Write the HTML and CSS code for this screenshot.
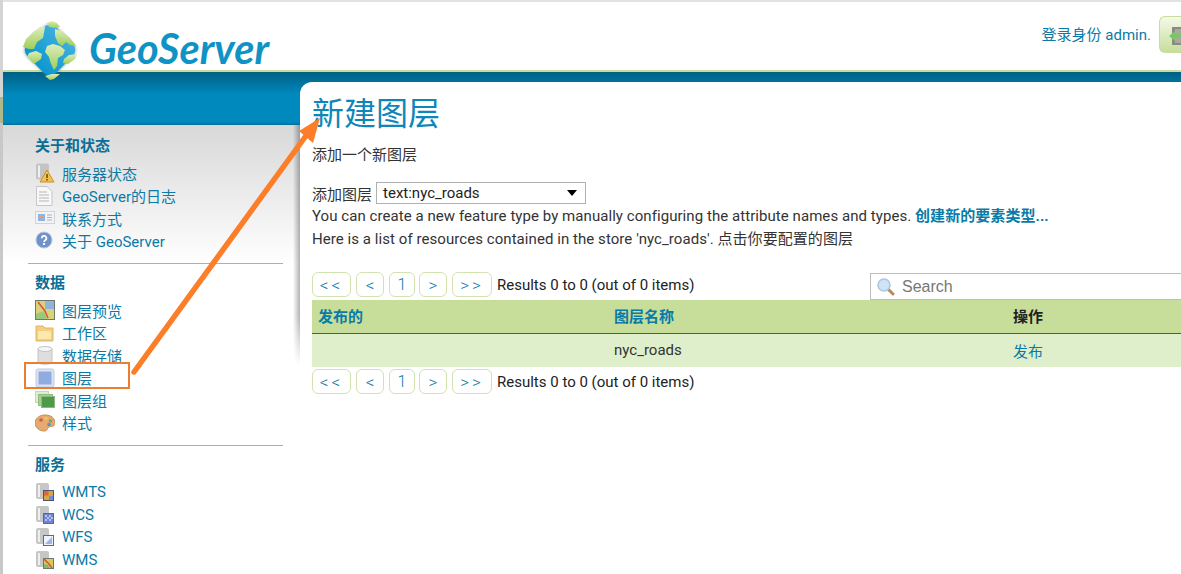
FILE: index.html
```html
<!DOCTYPE html>
<html lang="zh-CN">
<head>
    <meta charset="UTF-8">
    <meta name="viewport" content="width=device-width, initial-scale=1.0">
    <title>GeoServer: 新建图层</title>
    <link rel="stylesheet" href="styles.css">
</head>
<body>

    <header class="page-header">
        <a class="logo" href="#">
            <svg class="logo-globe" width="66" height="66" viewBox="17 16 66 66">
                <defs>
                    <linearGradient id="sea" x1="0" y1="0" x2="0" y2="1">
                        <stop offset="0" stop-color="#3fb0de"/>
                        <stop offset="1" stop-color="#0c97cf"/>
                    </linearGradient>
                    <linearGradient id="land" x1="0" y1="0" x2="0" y2="1">
                        <stop offset="0" stop-color="#dcedbc"/>
                        <stop offset="1" stop-color="#9fce5a"/>
                    </linearGradient>
                    <filter id="soft"><feGaussianBlur stdDeviation="1.500"/></filter>
                </defs>
                <!-- coordinates are the ones on the page -->
                <rect x="29" y="29" width="42" height="42" rx="9" transform="rotate(45 50 50)" fill="#777" opacity="0.55" filter="url(#soft)"/>
                <rect x="29.500" y="29.500" width="41" height="41" rx="9" transform="rotate(45 50 50)" fill="url(#sea)"/>
                <g fill="url(#land)">
                    <path d="M47 23l5-2 5 2 3 4-6 1-5-1z"/>
                    <path d="M45 27l-1 6-1 5-6 4-3 7-5 0-6-2 3-8 7-7 7-5z"/>
                    <path d="M29 53l7-2 6 3-1 5-7 5-3-3-4-4z"/>
                    <path d="M47 46l6-2 7 2 5 4-2 5-5 3-1 8-3 4-3-6-2-7-4-5z"/>
                    <path d="M55 29l7 2 8 7 6 8-6-1-4-3-4 4-4-3-3-7z"/>
                    <path d="M64 59l5-4 8-1-2 5-7 5-5-1z"/>
                    <path d="M45 76l7-2 8 0-6 5-4 1z"/>
                </g>
            </svg>
            <span class="logo-text">GeoServer</span>
        </a>
        <div class="login">
            <span>登录身份 admin.</span>
            <a class="logout" href="#">
                <svg width="18" height="18" viewBox="0 0 18 18">
                    <rect x="3" y="0" width="15" height="18" fill="#8a8a80"/>
                    <rect x="6" y="2" width="12" height="14" fill="#a8a89c"/>
                    <path d="M0 9l6-5v3h6v4H6v3z" fill="#7cc46a"/>
                </svg>
            </a>
        </div>
    </header>

    <div class="page-body">
        <nav class="sidebar">
            <h3>关于和状态</h3>
            <ul>
                <li>
                    <svg class="icon" viewBox="0 0 20 20">
                        <rect x="1" y="0.500" width="13" height="16" rx="2" fill="#c4c4c4"/>
                        <rect x="3" y="2.500" width="2" height="12" fill="#efefef"/>
                        <path d="M12 7l7 12H5z" fill="#f2c14e" stroke="#c8922a"/>
                        <rect x="11.300" y="11" width="1.500" height="4" fill="#6b4a10"/>
                        <rect x="11.300" y="16" width="1.500" height="1.500" fill="#6b4a10"/>
                    </svg>
                    <a href="#">服务器状态</a>
                </li>
                <li>
                    <svg class="icon" viewBox="0 0 20 20">
                        <path d="M1.500 .5H12l5 5V19.500H1.500z" fill="#f8f8f8" stroke="#c6c6c6"/>
                        <path d="M4 6h8M4 9h10M4 12h10M4 15h10" stroke="#b5b5b5"/>
                    </svg>
                    <a href="#">GeoServer的日志</a>
                </li>
                <li>
                    <svg class="icon" viewBox="0 0 20 20">
                        <rect x="0.500" y="3.500" width="19" height="12" fill="#f3f3f3" stroke="#cfd3dc"/>
                        <rect x="3" y="6" width="7" height="7" fill="#8fb3e6"/>
                        <circle cx="6.500" cy="8.500" r="1.800" fill="#e8a064"/>
                        <path d="M12 7h5M12 9.500h5M12 12h5" stroke="#a9b2c2"/>
                    </svg>
                    <a href="#">联系方式</a>
                </li>
                <li>
                    <svg class="icon" viewBox="0 0 20 20">
                        <circle cx="9" cy="9" r="8" fill="#6f93c9" stroke="#b9c8de"/>
                        <path d="M6.800 7.200a2.300 2.300 0 1 1 3.400 2c-.8.500-1.200.9-1.200 1.800" fill="none" stroke="#fff" stroke-width="1.700"/>
                        <rect x="8" y="12" width="2" height="2" fill="#fff"/>
                    </svg>
                    <a href="#">关于 GeoServer</a>
                </li>
            </ul>

            <h3>数据</h3>
            <ul>
                <li>
                    <svg class="icon" viewBox="0 0 20 20">
                        <rect x="0.500" y="0.500" width="19" height="19" fill="#d8d27a" stroke="#6f7a6a"/>
                        <rect x="10" y="1" width="9" height="8" fill="#8fb4dc"/>
                        <path d="M3 2l7 9 3 7" fill="none" stroke="#d9533a" stroke-width="1.500"/>
                        <path d="M1 14l8-3 3 8H1z" fill="#9cc77a"/>
                    </svg>
                    <a href="#">图层预览</a>
                </li>
                <li>
                    <svg class="icon" viewBox="0 0 20 20">
                        <path d="M1 3h7l2 2h8v13H1z" fill="#f4cf7c" stroke="#e0b36a"/>
                        <rect x="3" y="8" width="13" height="8" fill="#fbe9ae"/>
                    </svg>
                    <a href="#">工作区</a>
                </li>
                <li>
                    <svg class="icon" viewBox="0 0 20 20">
                        <path d="M3 4v13c0 3 14 3 14 0V4z" fill="#dedede" stroke="#c4c4c4"/>
                        <ellipse cx="10" cy="4" rx="7" ry="2.500" fill="#f5f5f5" stroke="#c4c4c4"/>
                    </svg>
                    <a href="#">数据存储</a>
                </li>
                <li>
                    <svg class="icon" viewBox="0 0 20 20">
                        <rect x="1" y="1" width="18" height="18" rx="2" fill="#dce3f1" stroke="#bfcbe0"/>
                        <rect x="3.500" y="3.500" width="13" height="13" fill="#8fabe0"/>
                    </svg>
                    <a href="#">图层</a>
                </li>
                <li>
                    <svg class="icon" viewBox="0 0 20 20">
                        <rect x="0.500" y="1.500" width="13" height="11" fill="#dcefd2" stroke="#bcdcae"/>
                        <rect x="3.500" y="4.500" width="14" height="11" fill="#a5cf94" stroke="#8ebd7c"/>
                        <rect x="6.500" y="6.500" width="13" height="11" fill="#4f9a4a" stroke="#8db884"/>
                    </svg>
                    <a href="#">图层组</a>
                </li>
                <li>
                    <svg class="icon" viewBox="0 0 20 20">
                        <path d="M10 2c6 0 10 3 10 8 0 4-4 3-6 4-2 .8-1 4-5 4-5 0-9-4-9-8s4-8 10-8z" fill="#e5a971" stroke="#c98a52"/>
                        <circle cx="6" cy="7" r="1.800" fill="#d65a4a"/>
                        <circle cx="11" cy="5.500" r="1.800" fill="#e8c94e"/>
                        <circle cx="15.500" cy="8" r="1.800" fill="#5fb36b"/>
                        <circle cx="14" cy="11.500" r="1.800" fill="#5c8fd6"/>
                    </svg>
                    <a href="#">样式</a>
                </li>
            </ul>

            <h3>服务</h3>
            <ul>
                <li>
                    <svg class="icon" viewBox="0 0 20 20">
                        <rect x="1" y="1" width="13" height="16" rx="2" fill="#c6c6c6"/>
                        <rect x="3" y="3" width="2" height="12" fill="#efefef"/>
                        <rect x="8.500" y="8.500" width="10" height="10" fill="#d9a441" stroke="#4b5470"/>
                        <rect x="9" y="9" width="4.500" height="4.500" fill="#d9693a"/>
                        <rect x="14" y="14" width="4" height="4" fill="#6f8fd0"/>
                    </svg>
                    <a href="#">WMTS</a>
                </li>
                <li>
                    <svg class="icon" viewBox="0 0 20 20">
                        <rect x="1" y="1" width="13" height="16" rx="2" fill="#c6c6c6"/>
                        <rect x="3" y="3" width="2" height="12" fill="#efefef"/>
                        <rect x="8.500" y="8.500" width="10" height="10" fill="#6f83d0" stroke="#5566b0"/>
                        <path d="M10 10h2v2h-2zM14 10h2v2h-2zM12 12h2v2h-2zM16 12h2v2h-2zM10 14h2v2h-2zM14 14h2v2h-2z" fill="#b5c3ee"/>
                    </svg>
                    <a href="#">WCS</a>
                </li>
                <li>
                    <svg class="icon" viewBox="0 0 20 20">
                        <rect x="1" y="1" width="13" height="16" rx="2" fill="#c6c6c6"/>
                        <rect x="3" y="3" width="2" height="12" fill="#efefef"/>
                        <rect x="8.500" y="8.500" width="10" height="10" fill="#eef2fb" stroke="#5566b0"/>
                        <path d="M10 17l7-7v7z" fill="#9db4e6"/>
                    </svg>
                    <a href="#">WFS</a>
                </li>
                <li>
                    <svg class="icon" viewBox="0 0 20 20">
                        <rect x="1" y="1" width="13" height="16" rx="2" fill="#c6c6c6"/>
                        <rect x="3" y="3" width="2" height="12" fill="#efefef"/>
                        <rect x="8.500" y="8.500" width="10" height="10" fill="#d8c95e" stroke="#6f7a6a"/>
                        <path d="M9 9l5 5 3 4" fill="none" stroke="#d9533a" stroke-width="1.500"/>
                        <path d="M9 14l4 1 2 3H9z" fill="#7fbc6a"/>
                    </svg>
                    <a href="#">WMS</a>
                </li>
            </ul>
        </nav>

        <main class="content">
            <h1>新建图层</h1>
            <p class="subtitle">添加一个新图层</p>

            <div class="store-row">
                <label>添加图层</label>
                <div class="select-box">
                    <span>text:nyc_roads</span>
                    <i class="select-arrow"></i>
                </div>
            </div>
            <div class="info-block">
                <p class="info">You can create a new feature type by manually configuring the attribute names and types. <a href="#"><strong>创建新的要素类型...</strong></a></p>
                <p class="info">Here is a list of resources contained in the store 'nyc_roads'. 点击你要配置的图层</p>
            </div>

            <div class="pager-row">
                <div class="pager">
                    <a class="first" href="#">&lt;&lt;</a>
                    <a class="step" href="#">&lt;</a>
                    <a class="num" href="#">1</a>
                    <a class="step" href="#">&gt;</a>
                    <a class="last" href="#">&gt;&gt;</a>
                    <span>Results 0 to 0 (out of 0 items)</span>
                </div>
                <div class="search">
                    <svg width="18" height="18" viewBox="0 0 18 18">
                        <path d="M11 11l5 5" stroke="#bd8a56" stroke-width="3" stroke-linecap="round"/>
                        <circle cx="7" cy="7" r="6" fill="#cfe2f8" stroke="#a9c6e8" stroke-width="1.500"/>
                    </svg>
                    <span>Search</span>
                </div>
            </div>

            <table class="results">
                <thead>
                    <tr>
                        <th class="col-pub"><a href="#">发布的</a></th>
                        <th class="col-name"><a href="#">图层名称</a></th>
                        <th>操作</th>
                    </tr>
                </thead>
                <tbody>
                    <tr>
                        <td></td>
                        <td>nyc_roads</td>
                        <td><a href="#">发布</a></td>
                    </tr>
                </tbody>
            </table>

            <div class="pager pager-bottom">
                <a class="first" href="#">&lt;&lt;</a>
                <a class="step" href="#">&lt;</a>
                <a class="num" href="#">1</a>
                <a class="step" href="#">&gt;</a>
                <a class="last" href="#">&gt;&gt;</a>
                <span>Results 0 to 0 (out of 0 items)</span>
            </div>
        </main>
    </div>

    <!-- orange annotation drawn over the screenshot -->
    <svg class="annotation" width="340" height="400" viewBox="0 0 340 400">
        <rect x="25" y="363" width="104" height="25" fill="none" stroke="#ed7d31" stroke-width="2"/>
        <path d="M134 372L308 133" fill="none" stroke="#fd7e28" stroke-width="5.500" stroke-linecap="round"/>
        <path d="M320 118L299 131 313 143z" fill="#fd7e28"/>
    </svg>

</body>
</html>
```

FILE: styles.css
```css
html { background: #fff; }

body {
    margin: 0;
    height: 574px;
    overflow: hidden;
    position: relative;
    box-sizing: border-box;
    border-left: 3px solid #c4c4c4;
    border-image: linear-gradient(#d4d4d4 98px, #aeb78a 98px, #aeb78a 124px, #c8c8c8 124px) 1;
    color: #333;
    font-family: Roboto, "Noto Sans CJK SC", sans-serif;
    font-size: 15px;
}

a { color: #0a7aa6; text-decoration: none; }

.page-header {
    height: 72px;
    box-sizing: border-box;
    border-top: 2px solid #e2e2e2;
    border-bottom: 2px solid #c8dd9c;
    display: flex;
    justify-content: space-between;
    position: relative;
    z-index: 1;
}

.logo { display: flex; align-items: flex-start; padding-left: 14px; padding-top: 14px; }
.logo-globe { margin-right: 6px; flex: none; }
.logo-text {
    font-family: Lato, sans-serif;
    font-size: 41.500px;
    font-weight: bold;
    font-style: italic;
    color: #0f93c4;
    margin-top: 8px;
    line-height: 48px;
}

.login { display: flex; align-items: flex-start; padding-top: 14px; color: #0a7aa6; }
.login span { margin-top: 9px; margin-right: 8px; line-height: 20px; }
.logout {
    width: 22px;
    height: 37px;
    box-sizing: border-box;
    border: 1px solid #c8dd9c;
    border-right: 0;
    border-radius: 6px 0 0 6px;
    background: linear-gradient(#f4f9e8, #c6de9b);
    padding: 10px 0 0 9px;
    overflow: hidden;
}

.page-body {
    display: flex;
    background: linear-gradient(#005f85 0, #0089bd 22px, #0089bd 50px, #006d97 53px, #fff 53px);
    height: 502px;
}

.sidebar {
    width: 297px;
    flex: none;
    margin-top: 53px;
    padding: 10px 17px 0 32px;
    box-sizing: border-box;
    background: linear-gradient(#d8d8d8, #fff 140px);
    position: relative;
}
/* soft shadow the content panel throws on the menu, it fades out towards the bottom */
.sidebar::after {
    content: "";
    position: absolute;
    top: 0;
    right: 0;
    width: 7px;
    height: 240px;
    background: linear-gradient(to left, rgba(0, 0, 0, 0.3), transparent);
    -webkit-mask-image: linear-gradient(#000 80%, transparent);
    mask-image: linear-gradient(#000 80%, transparent);
}
.sidebar h3 {
    margin: 0 0 6px;
    padding-top: 1px;
    font-size: 15px;
    font-weight: bold;
    color: #0a6f96;
    line-height: 20px;
}
.sidebar ul {
    list-style: none;
    margin: 0 0 8px -7px;
    padding: 0 0 11px 7px;
    border-bottom: 1px solid #a9b78f;
}
.sidebar ul:last-child { border-bottom: 0; }
.sidebar li { display: flex; align-items: center; height: 22.500px; }
.sidebar .icon { width: 20px; height: 20px; margin-right: 7px; flex: none; }

.content {
    flex: 1;
    margin-top: 10px;
    padding: 8px 0 0 12px;
    background: #fff;
    border-top-left-radius: 12px;
    min-width: 0;
}
.content h1 {
    margin: 0;
    font-size: 32px;
    font-weight: normal;
    line-height: 48px;
    color: #0f86b8;
}
.subtitle { margin: 7px 0 17px; line-height: 20px; }
.info-block { margin-top: 1px; }
.info { margin: 0; line-height: 23px; white-space: nowrap; letter-spacing: 0.06px; }

.store-row { display: flex; align-items: center; gap: 4px; height: 22px; }
.select-box {
    width: 210px;
    height: 22px;
    box-sizing: border-box;
    border: 1px solid #b0b0b0;
    padding: 0 8px 0 6px;
    display: flex;
    align-items: center;
    justify-content: space-between;
    color: #222;
}
.select-arrow {
    width: 0;
    height: 0;
    border-left: 5px solid transparent;
    border-right: 5px solid transparent;
    border-top: 6px solid #000;
}

.pager-row { display: flex; justify-content: space-between; margin-top: 21px; height: 28px; }
.pager { display: flex; align-items: center; height: 25px; }
.pager-bottom { margin-top: 2px; }
.pager a {
    height: 25px;
    box-sizing: border-box;
    border: 1.500px solid #d2e3b0;
    border-radius: 6px;
    display: flex;
    align-items: center;
    justify-content: center;
    letter-spacing: 3px;
    font-size: 17px;
    font-weight: 300;
}
.pager .first { width: 39px; margin-right: 5px; }
.pager .step { width: 28px; margin-right: 5px; letter-spacing: 0; }
.pager .num { width: 26px; margin-right: 4px; letter-spacing: 0; font-size: 16px; }
.pager .last { width: 40px; margin-right: 5px; }
.pager span { color: #222; }

.search {
    width: 311px;
    height: 27px;
    margin-top: 1px;
    box-sizing: border-box;
    border: 1px solid #bdbdbd;
    border-right: 0;
    display: flex;
    align-items: center;
    gap: 7px;
    padding-left: 6px;
    color: #777;
    font-family: "Liberation Sans", sans-serif;
    font-size: 16px;
    flex: none;
}

.results {
    width: 869px;
    border-collapse: collapse;
    table-layout: fixed;
}
.results th {
    background: #c7de9a;
    height: 31px;
    padding: 0 6px 2px;
    text-align: left;
    border-bottom: 1px solid #0f6f8f;
    color: #222;
}
.results td {
    background: #e0efcb;
    height: 32px;
    padding: 0 6px 1px;
    color: #333;
}
.col-pub { width: 284px; }
.col-name { width: 387px; }

.annotation {
    position: absolute;
    left: -3px;
    top: 0;
    z-index: 2;
}
```
